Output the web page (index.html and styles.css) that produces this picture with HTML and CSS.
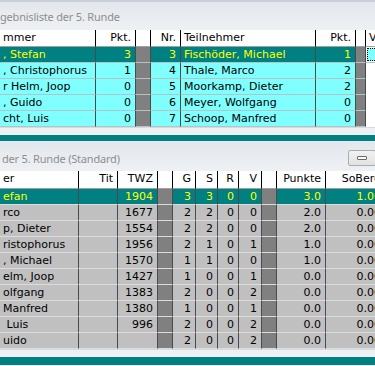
FILE: index.html
```html
<!DOCTYPE html>
<html lang="de">
<head>
<meta charset="utf-8">
<title>Ergebnisliste</title>
<link rel="stylesheet" href="styles.css">
</head>
<body>
<div class="app">
  <div class="topedge"></div>
  <div class="caption caption-top"><span class="caption-text">gebnisliste der 5. Runde</span></div>
  <div class="grid pairs">
    <div class="row head">
      <div class="c txt">mmer</div><div class="c num">Pkt.</div><div class="c gap"></div><div class="c num">Nr.</div><div class="c txt">Teilnehmer</div><div class="c num">Pkt.</div><div class="c gap"></div><div class="c txt">V</div>
    </div>
    <div class="row sel">
      <div class="c txt">, Stefan</div><div class="c num">3</div><div class="c gap"></div><div class="c num">3</div><div class="c txt">Fischöder, Michael</div><div class="c num">1</div><div class="c gap"></div><div class="c focus"><span class="focus-box"></span></div>
    </div>
    <div class="row">
      <div class="c txt">, Christophorus</div><div class="c num">1</div><div class="c gap"></div><div class="c num">4</div><div class="c txt">Thale, Marco</div><div class="c num">2</div><div class="c gap"></div><div class="c blank"></div>
    </div>
    <div class="row">
      <div class="c txt">r Helm, Joop</div><div class="c num">0</div><div class="c gap"></div><div class="c num">5</div><div class="c txt">Moorkamp, Dieter</div><div class="c num">2</div><div class="c gap"></div><div class="c blank"></div>
    </div>
    <div class="row">
      <div class="c txt">, Guido</div><div class="c num">0</div><div class="c gap"></div><div class="c num">6</div><div class="c txt">Meyer, Wolfgang</div><div class="c num">0</div><div class="c gap"></div><div class="c blank"></div>
    </div>
    <div class="row">
      <div class="c txt">cht, Luis</div><div class="c num">0</div><div class="c gap"></div><div class="c num">7</div><div class="c txt">Schoop, Manfred</div><div class="c num">0</div><div class="c gap"></div><div class="c blank"></div>
    </div>
  </div>
  <div class="strip"></div>
  <div class="band"></div>

  <div class="caption caption-bottom">
    <span class="caption-text">der 5. Runde (Standard)</span>
    <span class="minbtn"><span class="minicon"></span></span>
  </div>
  <div class="grid standings">
    <div class="row head">
      <div class="c txt">er</div><div class="c num">Tit</div><div class="c num">TWZ</div><div class="c gap"></div><div class="c num">G</div><div class="c num">S</div><div class="c num">R</div><div class="c num">V</div><div class="c gap"></div><div class="c num">Punkte</div><div class="c num">SoBerg</div>
    </div>
    <div class="row sel">
      <div class="c txt">efan</div><div class="c num"></div><div class="c num">1904</div><div class="c gap"></div><div class="c num">3</div><div class="c num">3</div><div class="c num">0</div><div class="c num">0</div><div class="c gap"></div><div class="c num">3.0</div><div class="c num">1.00</div>
    </div>
    <div class="row">
      <div class="c txt">rco</div><div class="c num"></div><div class="c num">1677</div><div class="c gap"></div><div class="c num">2</div><div class="c num">2</div><div class="c num">0</div><div class="c num">0</div><div class="c gap"></div><div class="c num">2.0</div><div class="c num">0.00</div>
    </div>
    <div class="row">
      <div class="c txt">p, Dieter</div><div class="c num"></div><div class="c num">1554</div><div class="c gap"></div><div class="c num">2</div><div class="c num">2</div><div class="c num">0</div><div class="c num">0</div><div class="c gap"></div><div class="c num">2.0</div><div class="c num">0.00</div>
    </div>
    <div class="row">
      <div class="c txt">ristophorus</div><div class="c num"></div><div class="c num">1956</div><div class="c gap"></div><div class="c num">2</div><div class="c num">1</div><div class="c num">0</div><div class="c num">1</div><div class="c gap"></div><div class="c num">1.0</div><div class="c num">0.00</div>
    </div>
    <div class="row">
      <div class="c txt">, Michael</div><div class="c num"></div><div class="c num">1570</div><div class="c gap"></div><div class="c num">1</div><div class="c num">1</div><div class="c num">0</div><div class="c num">0</div><div class="c gap"></div><div class="c num">1.0</div><div class="c num">0.00</div>
    </div>
    <div class="row">
      <div class="c txt">elm, Joop</div><div class="c num"></div><div class="c num">1427</div><div class="c gap"></div><div class="c num">1</div><div class="c num">0</div><div class="c num">0</div><div class="c num">1</div><div class="c gap"></div><div class="c num">0.0</div><div class="c num">0.00</div>
    </div>
    <div class="row">
      <div class="c txt">olfgang</div><div class="c num"></div><div class="c num">1383</div><div class="c gap"></div><div class="c num">2</div><div class="c num">0</div><div class="c num">0</div><div class="c num">2</div><div class="c gap"></div><div class="c num">0.0</div><div class="c num">0.00</div>
    </div>
    <div class="row">
      <div class="c txt">Manfred</div><div class="c num"></div><div class="c num">1380</div><div class="c gap"></div><div class="c num">1</div><div class="c num">0</div><div class="c num">0</div><div class="c num">1</div><div class="c gap"></div><div class="c num">0.0</div><div class="c num">0.00</div>
    </div>
    <div class="row">
      <div class="c txt">&nbsp;Luis</div><div class="c num"></div><div class="c num">996</div><div class="c gap"></div><div class="c num">2</div><div class="c num">0</div><div class="c num">0</div><div class="c num">2</div><div class="c gap"></div><div class="c num">0.0</div><div class="c num">0.00</div>
    </div>
    <div class="row">
      <div class="c txt">uido</div><div class="c num"></div><div class="c num"></div><div class="c gap"></div><div class="c num">2</div><div class="c num">0</div><div class="c num">0</div><div class="c num">2</div><div class="c gap"></div><div class="c num">0.0</div><div class="c num">0.00</div>
    </div>
  </div>
  <div class="strip"></div>
  <div class="band band-bottom"></div>
</div>
</body>
</html>
```
FILE: styles.css
```css
* { box-sizing: border-box; }
html, body { margin: 0; padding: 0; background: #f0f0f0; }
.app {
  width: 375px;
  height: 366px;
  overflow: hidden;
  display: flex;
  flex-direction: column;
}
.topedge { height: 2px; background: #c6ced7; flex: none; }
.caption {
  flex: none;
  display: flex;
  align-items: center;
  justify-content: space-between;
  background: linear-gradient(#e3e7ec, #eef1f4);
  font-family: "Noto Sans", "Open Sans", sans-serif;
  font-size: 11px;
  letter-spacing: -0.2px;
  color: #8e8e8e;
  white-space: nowrap;
}
.caption-top { height: 28px; padding-left: 0; }
.caption-bottom { height: 30px; padding: 4px 0 0 2px; }
.minbtn {
  width: 28px;
  height: 16px;
  margin-right: -1px;
  border: 1px solid #acacac;
  border-radius: 2px;
  background: linear-gradient(#f2f2f2, #e2e2e2);
  display: flex;
  align-items: center;
  justify-content: center;
  padding-right: 1px;
}
.minicon {
  width: 10px;
  height: 4px;
  border: 1px solid #6a6a6a;
  border-radius: 1px;
  background: #fafafa;
}
.grid {
  flex: none;
  width: 460px;
  font-family: "DejaVu Sans", "Liberation Sans", sans-serif;
  font-size: 11px;
  color: #000;
}
.row { display: grid; height: 16px; }
.pairs .row { grid-template-columns: 96px 40px 15px 30px 135px 40px 10px 94px; }
.standings .row { grid-template-columns: 79px 39px 40px 15px 23px 22px 21px 23px 15px 49px 60px; }
.pairs .row.head { height: 17px; }
.standings .row.head { height: 18px; }
.c {
  overflow: hidden;
  white-space: nowrap;
  line-height: 15px;
  border-right: 1px solid #4a4a4a;
  border-bottom: 1px solid #b4c4c4;
}
.pairs .c { background: #80ffff; }
.standings .c { background: #c0c0c0; border-bottom-color: #dcdcdc; }
.txt { padding-left: 3px; }
.num { text-align: right; padding-right: 4px; }
.head .c {
  background: #fff;
  border-right-color: #000;
  border-bottom-color: #a0a0a0;
  line-height: 16px;
}
.sel .c { background: #008080; color: #ffff00; }
.grid .c.gap { background: #808080; }
.head .c.gap { background: #fff; }
.c.blank { background: #fff; border-bottom-color: #fff; }
.c.focus { background: #fff; padding: 1px 0 1px 1px; }
.focus-box {
  display: block;
  height: 100%;
  background: #80ffff;
  border: 1px dotted #000;
}
.strip { flex: none; height: 8px; background: #eef1f4; border-top: 1px solid #d6dade; }
.band { flex: none; height: 6px; background: #008080; }
.band-bottom { height: 8px; }
```
